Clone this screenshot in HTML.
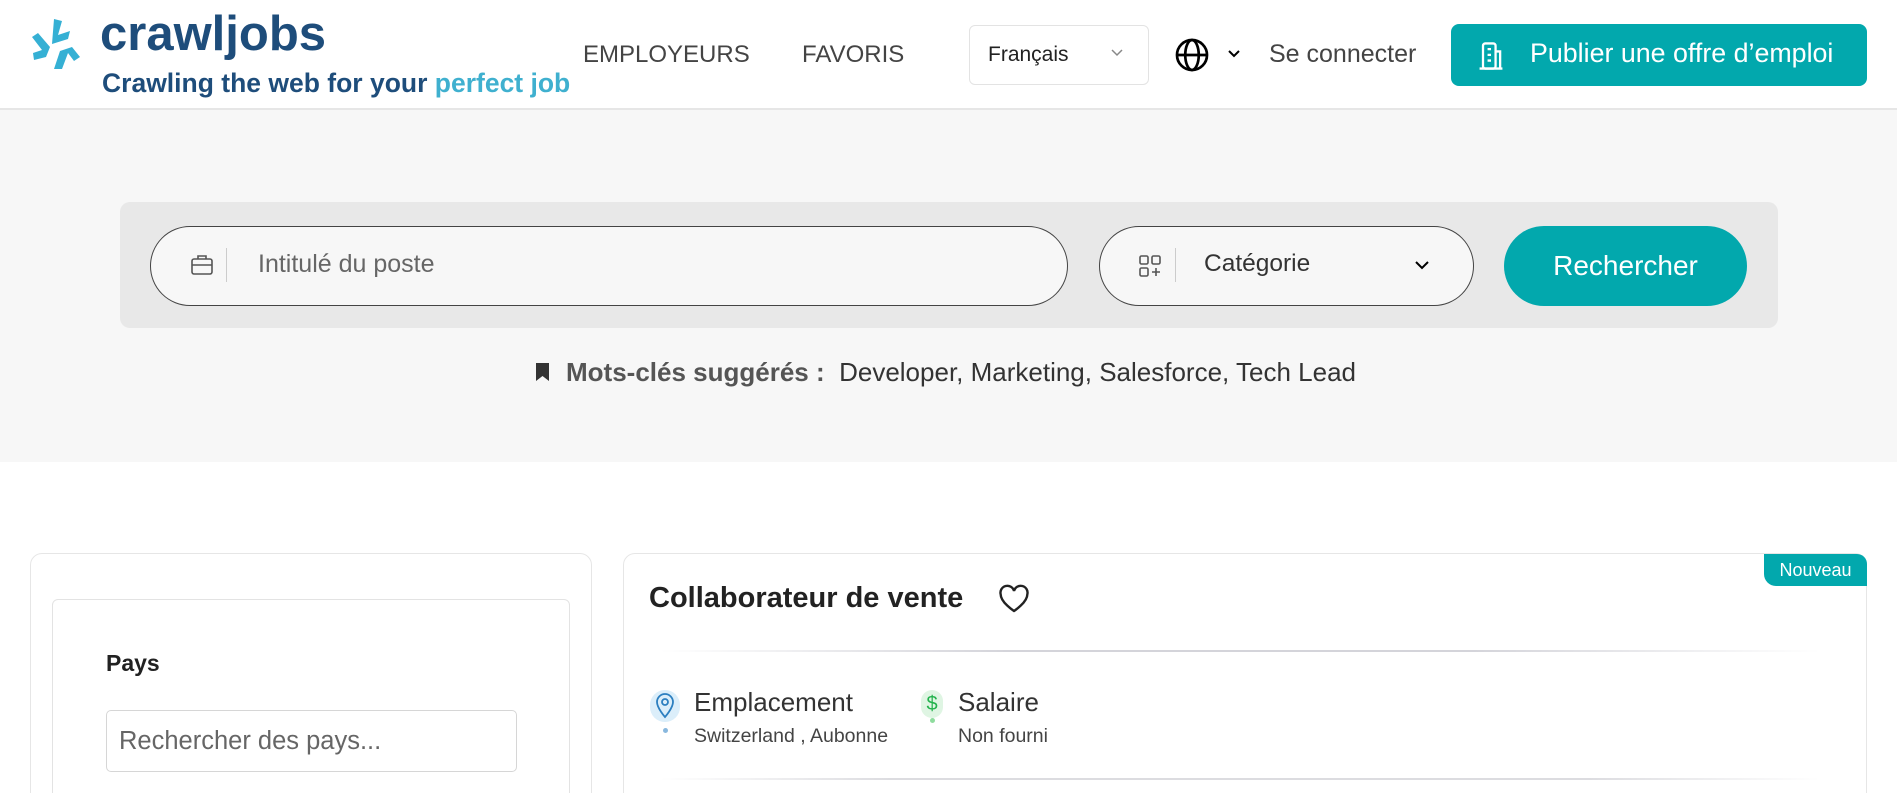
<!DOCTYPE html>
<html style="width:1897px;height:793px;overflow:hidden"><head><meta charset="utf-8"><style>
*{box-sizing:border-box;margin:0;padding:0}
body{width:1897px;height:793px;overflow:hidden;background:#fff;font-family:"Liberation Sans",sans-serif;color:#333;position:relative}
.abs{position:absolute;white-space:nowrap}
header{position:absolute;left:0;top:0;width:1897px;height:110px;background:#fff;border-bottom:2px solid #e6e6e6}
.hero{position:absolute;left:0;top:110px;width:1897px;height:352px;background:#f7f7f7}
</style></head><body>
<header>
<svg class="abs" style="left:30px;top:17px" width="56" height="54" viewBox="0 0 56 54">
<g fill="#35b0d4">
<path d="M24 2 L32 4 L28 18 L40 14 L38 22 L22 27 Z"/>
<path d="M2 20 L8 16 L20 30 L16 40 L4 43 L3 36 L12 33 Z"/>
<path d="M24 52 L30 34 L42 30 L50 40 L44 44 L38 36 L32 52 Z"/>
</g></svg>
<div class="abs" style="left:100px;top:6px;font-size:49px;font-weight:bold;color:#1e4d7b">crawljobs</div>
<div class="abs" style="left:102px;top:68px;font-size:26.5px;font-weight:bold;color:#1e4d7b">Crawling the web for your <span style="color:#3fb0cf">perfect job</span></div>
<div class="abs" style="left:583px;top:41px;font-size:24px;color:#444">EMPLOYEURS</div>
<div class="abs" style="left:802px;top:41px;font-size:24px;color:#444">FAVORIS</div>
<div class="abs" style="left:969px;top:25px;width:180px;height:60px;border:1px solid #e3e3e3;border-radius:6px"></div>
<div class="abs" style="left:988px;top:43px;font-size:21px;color:#222">Français</div>
<svg class="abs" style="left:1110px;top:48px" width="14" height="10"><path d="M2 2l5 5 5-5" stroke="#888" stroke-width="1.5" fill="none"/></svg>
<svg class="abs" style="left:1174px;top:37px" width="36" height="36" viewBox="0 0 24 24" fill="none" stroke="#000" stroke-width="1.8"><circle cx="12" cy="12" r="10"/><ellipse cx="12" cy="12" rx="4.5" ry="10"/><path d="M2 12h20"/></svg>
<svg class="abs" style="left:1227px;top:49px" width="14" height="10"><path d="M2 2l5 5 5-5" stroke="#000" stroke-width="2" fill="none"/></svg>
<div class="abs" style="left:1269px;top:40px;font-size:25px;color:#444">Se connecter</div>
<div class="abs" style="left:1451px;top:24px;width:416px;height:62px;background:#02a8ad;border-radius:8px"></div>
<svg class="abs" style="left:1477px;top:40px" width="28" height="32" viewBox="0 0 24 28" fill="none" stroke="#fff" stroke-width="2"><rect x="5" y="3" width="11" height="22" rx="2"/><path d="M16 10h4v15h-4M2 25h20M9 8h3M9 13h3M9 18h3"/></svg>
<div class="abs" style="left:1530px;top:38px;font-size:26.8px;color:#fff">Publier une offre d’emploi</div>
</header>
<div class="hero"></div>
<div class="abs" style="left:120px;top:202px;width:1658px;height:126px;background:#e8e8e8;border-radius:10px"></div>
<div class="abs" style="left:150px;top:226px;width:918px;height:80px;border:1px solid #444;border-radius:40px;background:#f7f7f7"></div>
<svg class="abs" style="left:190px;top:254px" width="24" height="22" viewBox="0 0 24 22" fill="none" stroke="#555" stroke-width="1.6"><rect x="2" y="5" width="20" height="15" rx="2"/><path d="M8 5V2h8v3M2 11h20"/></svg>
<div class="abs" style="left:226px;top:248px;width:1px;height:34px;background:#ccc"></div>
<div class="abs" style="left:258px;top:250px;font-size:25px;color:#666">Intitulé du poste</div>
<div class="abs" style="left:1099px;top:226px;width:375px;height:80px;border:1px solid #444;border-radius:40px;background:#f7f7f7"></div>
<svg class="abs" style="left:1138px;top:254px" width="24" height="24" viewBox="0 0 24 24" fill="none" stroke="#555" stroke-width="1.6"><rect x="2" y="2" width="8" height="8" rx="1.5"/><rect x="14" y="2" width="8" height="8" rx="1.5"/><rect x="2" y="14" width="8" height="8" rx="1.5"/><path d="M18 14v8M14 18h8"/></svg>
<div class="abs" style="left:1175px;top:248px;width:1px;height:34px;background:#ccc"></div>
<div class="abs" style="left:1204px;top:250px;font-size:24.5px;color:#333">Catégorie</div>
<svg class="abs" style="left:1414px;top:260px" width="16" height="10"><path d="M2 2l6 6 6-6" stroke="#000" stroke-width="2" fill="none"/></svg>
<div class="abs" style="left:1504px;top:226px;width:243px;height:80px;background:#02a8ad;border-radius:40px;color:#fff;font-size:28px;text-align:center;line-height:80px">Rechercher</div>
<svg class="abs" style="left:535px;top:362px" width="15" height="20" viewBox="0 0 15 20"><path d="M1 1h13v18l-6.5-5L1 19z" fill="#333"/></svg>
<div class="abs" style="left:566px;top:357px;font-size:26px;color:#333"><b style="color:#555">Mots-clés suggérés :</b>&nbsp; Developer, Marketing, Salesforce, Tech Lead</div>

<div class="abs" style="left:30px;top:553px;width:562px;height:300px;border:1px solid #e6e6e6;border-radius:12px"></div>
<div class="abs" style="left:52px;top:599px;width:518px;height:260px;border:1px solid #e3e3e3;border-radius:6px"></div>
<div class="abs" style="left:106px;top:650px;font-size:23px;font-weight:bold;color:#222">Pays</div>
<div class="abs" style="left:106px;top:710px;width:411px;height:62px;border:1px solid #d6d6d6;border-radius:5px"></div>
<div class="abs" style="left:119px;top:727px;font-size:25.5px;color:#666">Rechercher des pays...</div>

<div class="abs" style="left:623px;top:553px;width:1244px;height:300px;border:1px solid #e6e6e6;border-radius:12px"></div>
<div class="abs" style="left:1764px;top:554px;width:103px;height:32px;background:#02a8ad;border-radius:0 10px 0 12px;color:#fff;font-size:18px;text-align:center;line-height:32px">Nouveau</div>
<div class="abs" style="left:649px;top:582px;font-size:29px;font-weight:bold;color:#222">Collaborateur de vente</div>
<svg class="abs" style="left:998px;top:584px" width="32" height="30" viewBox="0 0 24 22" fill="none" stroke="#222" stroke-width="1.8"><path d="M12 20S2 13.5 2 7.5A5 5 0 0 1 12 5a5 5 0 0 1 10 2.5C22 13.5 12 20 12 20z"/></svg>
<div class="abs" style="left:660px;top:650px;width:1160px;height:2px;background:linear-gradient(90deg,transparent,#d4d4da 30%,#d4d4da 70%,transparent)"></div>
<div class="abs" style="left:650px;top:690px;width:30px;height:32px;background:#dbeefa;border-radius:15px"></div>
<svg class="abs" style="left:655px;top:693px" width="20" height="26" viewBox="0 0 20 26" fill="none" stroke="#2c7fc0" stroke-width="1.8"><path d="M10 24S2 15 2 9a8 8 0 0 1 16 0c0 6-8 15-8 15z"/><circle cx="10" cy="9" r="3"/></svg>
<div class="abs" style="left:663px;top:728px;width:5px;height:5px;background:#89b8de;border-radius:50%"></div>
<div class="abs" style="left:694px;top:687px;font-size:26px;color:#333">Emplacement</div>
<div class="abs" style="left:694px;top:725px;font-size:19.5px;color:#444">Switzerland , Aubonne</div>
<div class="abs" style="left:921px;top:690px;width:22px;height:28px;background:#dff5e3;border-radius:11px;color:#22b24c;font-size:20px;text-align:center;line-height:28px">$</div>
<div class="abs" style="left:930px;top:718px;width:5px;height:5px;background:#8fdc9e;border-radius:50%"></div>
<div class="abs" style="left:958px;top:687px;font-size:26px;color:#333">Salaire</div>
<div class="abs" style="left:958px;top:725px;font-size:19.5px;color:#444">Non fourni</div>
<div class="abs" style="left:660px;top:778px;width:1160px;height:2px;background:linear-gradient(90deg,transparent,#dcdce0 20%,#dcdce0 80%,transparent)"></div>
</body></html>
